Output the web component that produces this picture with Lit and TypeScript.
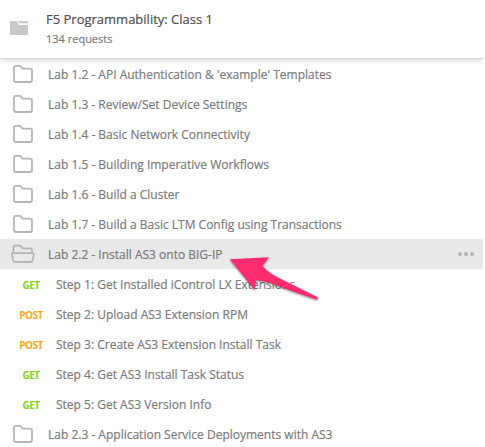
import { LitElement, html, css, svg } from "lit";
import { customElement, property } from "lit/decorators.js";

type Item =
  | { kind: "folder"; name: string; open?: boolean }
  | { kind: "request"; name: string; method: "GET" | "POST" };

const ITEMS: Item[] = [
  { kind: "folder", name: "Lab 1.2 - API Authentication & 'example' Templates" },
  { kind: "folder", name: "Lab 1.3 - Review/Set Device Settings" },
  { kind: "folder", name: "Lab 1.4 - Basic Network Connectivity" },
  { kind: "folder", name: "Lab 1.5 - Building Imperative Workflows" },
  { kind: "folder", name: "Lab 1.6 - Build a Cluster" },
  { kind: "folder", name: "Lab 1.7 - Build a Basic LTM Config using Transactions" },
  { kind: "folder", name: "Lab 2.2 - Install AS3 onto BIG-IP", open: true },
  { kind: "request", method: "GET", name: "Step 1: Get Installed iControl LX Extensions" },
  { kind: "request", method: "POST", name: "Step 2: Upload AS3 Extension RPM" },
  { kind: "request", method: "POST", name: "Step 3: Create AS3 Extension Install Task" },
  { kind: "request", method: "GET", name: "Step 4: Get AS3 Install Task Status" },
  { kind: "request", method: "GET", name: "Step 5: Get AS3 Version Info" },
  { kind: "folder", name: "Lab 2.3 - Application Service Deployments with AS3" },
];

@customElement("folder-row")
class FolderRow extends LitElement {
  @property() name = "";
  @property({ type: Boolean }) open = false;

  static styles = css`
    :host { display: block; }
    .row { display: flex; align-items: center; height: 30px; padding-left: 11px; box-sizing: border-box; }
    .row.open { background: #e9e9e9; }
    .icon { flex: none; width: 24px; height: 20px; margin-right: 13px; fill: none; stroke: #b6b6b6; stroke-width: 1.8; stroke-linejoin: round; }
    .name { flex: 1; white-space: nowrap; line-height: 28px; padding-top: 2px; -webkit-text-stroke: 0.2px currentColor; }
    .more { display: flex; gap: 2px; padding-right: 9px; }
    .dot { width: 4px; height: 4px; border-radius: 50%; background: #b4b4b4; }
  `;

  render() {
    const glyph = this.open
      ? svg`<path d="M2.4 8.5V3.6Q2.4 1.7 4.3 1.7H8.6Q9.5 1.7 10.1 2.4L11.8 4.4H19.1Q21 4.4 21 6.3V8.5"/>
            <path d="M2.2 9.1H21.6Q23.1 9.1 22.8 10.5L21.5 16.6Q21.2 18 19.8 18H4Q2.6 18 2.3 16.6L1 10.5Q.7 9.1 2.2 9.1Z"/>`
      : svg`<path d="M3 3.8Q3 1.9 4.9 1.9H8.6Q9.3 1.9 9.8 2.5L11.5 4.6H19.1Q21 4.6 21 6.5V16.1Q21 18 19.1 18H4.9Q3 18 3 16.1Z"/>`;
    return html`<div class="row ${this.open ? "open" : ""}">
      <svg class="icon" viewBox="0 0 24 20">${glyph}</svg>
      <span class="name">${this.name}</span>
      ${this.open
        ? html`<span class="more"><i class="dot"></i><i class="dot"></i><i class="dot"></i></span>`
        : ""}
    </div>`;
  }
}

@customElement("request-row")
class RequestRow extends LitElement {
  @property() name = "";
  @property() method = "GET";

  static styles = css`
    :host { display: block; }
    .row { display: flex; align-items: center; height: 30px; padding-left: 15px; }
    .method { width: 32px; margin-right: 9px; text-align: center; font-size: 10px; font-weight: 700; letter-spacing: -0.5px; line-height: 28px; padding-top: 1px; }
    .get { color: #7ed321; }
    .post { color: #f5a623; }
    .name { white-space: nowrap; line-height: 28px; padding-top: 2px; -webkit-text-stroke: 0.2px currentColor; }
  `;

  render() {
    return html`<div class="row">
      <span class="method ${this.method.toLowerCase()}">${this.method}</span>
      <span class="name">${this.name}</span>
    </div>`;
  }
}

@customElement("app-root")
class AppRoot extends LitElement {
  static styles = css`
    :host {
      display: block; position: relative; height: 447px; overflow: hidden; background: #fff;
      font-family: "Open Sans", "Noto Sans", sans-serif; font-size: 12px; color: #7c7c7c;
    }
    .header {
      display: flex; box-sizing: border-box; height: 59px; width: 483px; padding: 10px 0 0 10px;
      border-bottom: 1px solid #d6d6d6; box-shadow: 0 2px 5px rgba(0, 0, 0, 0.13); clip-path: inset(0 0 -9px 0);
    }
    .collection { flex: none; width: 18px; height: 14px; margin: 11px 18px 0 0; fill: #c9c9c9; }
    .title { font-size: 13px; line-height: 19px; color: #505050; white-space: nowrap; -webkit-text-stroke: 0.2px currentColor; }
    .count { font-size: 11px; line-height: 19px; -webkit-text-stroke: 0.2px currentColor; }
    .list { width: 483px; }
    .arrow { position: absolute; left: 225px; top: 250px; width: 100px; height: 56px; fill: #ff2d70; filter: drop-shadow(0 1px 1px rgba(0, 0, 0, 0.45)); }
  `;

  render() {
    return html`
      <div class="header">
        <svg class="collection" viewBox="0 0 18 14"><path d="M0 0H6.5L9 4H18V14H0ZM7.8 0H18V2.3H9.3Z"/></svg>
        <div>
          <div class="title">F5 Programmability: Class 1</div>
          <div class="count">134 requests</div>
        </div>
      </div>
      <div class="list">
        ${ITEMS.map((item) =>
          item.kind === "folder"
            ? html`<folder-row .name=${item.name} .open=${!!item.open}></folder-row>`
            : html`<request-row .name=${item.name} .method=${item.method}></request-row>`
        )}
      </div>
      <svg class="arrow" viewBox="0 0 100 56">
        <path d="M4.8 9.3L44 7.3L37.5 15.8Q41 21 52 27Q66 34 92.3 47Q93.5 49.5 91.5 49.5Q71 43 56 37Q42 31 30.8 30.3L29.6 40Z"/>
      </svg>`;
  }
}
